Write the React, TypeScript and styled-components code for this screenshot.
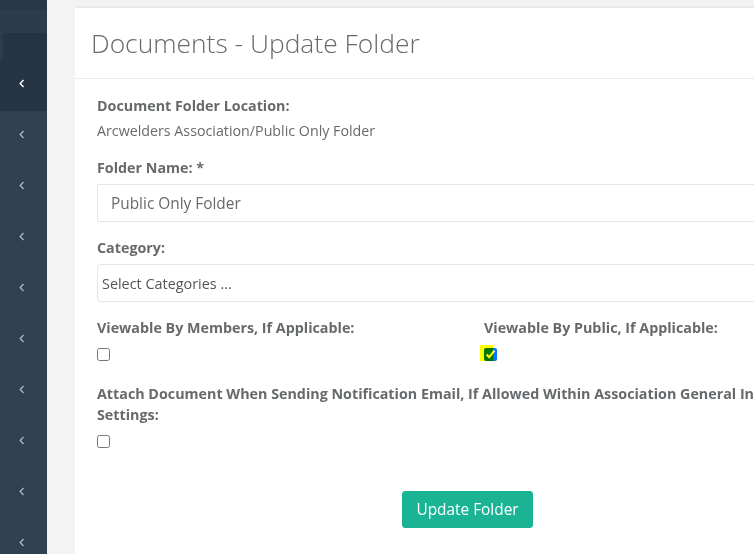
import React from "react";
import styled, { createGlobalStyle } from "styled-components";

const Global = createGlobalStyle`
  html, body { margin: 0; padding: 0; overflow: hidden; background: #f3f3f4; }
  body { font-family: "Open Sans", "Liberation Sans", sans-serif; color: #676a6c; }
  * { box-sizing: border-box; }
`;

const Page = styled.div`
  display: flex;
  width: 1000px;
  height: 554px;
  overflow: hidden;
  background: #f3f3f4;
`;

const Sidebar = styled.nav`
  width: 47px;
  flex: none;
  background: #2f4050;
  display: flex;
  flex-direction: column;
  overflow: hidden;
`;

const SideTop = styled.div`
  height: 33px;
  flex: none;
  background: linear-gradient(#27374a 0 10px, #2c3c4e 10px);
`;

const SideProfile = styled.div`
  height: 27px;
  flex: none;
  background: #2c3c4e;
  padding-left: 3px;
  display: flex;
`;

const SideProfileInner = styled.div`
  flex: 1;
  background: #243444;
`;

const SideItem = styled.div<{ $active?: boolean }>`
  height: 51px;
  flex: none;
  display: flex;
  align-items: center;
  padding: 0 0 4px 19px;
  background: ${(p) => (p.$active ? "#263545" : "transparent")};
  color: ${(p) => (p.$active ? "#ffffff" : "#a7b1c2")};
`;

const Main = styled.main`
  flex: 1;
  padding: 6px 0 0 28px;
`;

const Card = styled.section`
  width: 785px;
  background: #fff;
  border-top: 2px solid #e7eaec;
  height: 560px;
`;

const CardHeader = styled.header`
  height: 71px;
  border-bottom: 1px solid #e7eaec;
  padding: 0 16px;
  display: flex;
  align-items: center;
`;

const Title = styled.h1`
  margin: 0;
  font-weight: 300;
  font-size: 26.4px;
  color: #676a6c;
`;

const CardBody = styled.div`
  padding: 16px 22px 0;
`;

const Label = styled.div`
  font-weight: 700;
  font-size: 14.3px;
  line-height: 21px;
`;

const Value = styled.div`
  font-size: 14.25px;
  line-height: 20px;
  margin-top: 5px;
`;

const Group = styled.div<{ $mb?: number }>`
  margin-bottom: ${(p) => p.$mb ?? 15}px;
`;

const Input = styled.div`
  margin-top: 6px;
  height: 38px;
  border: 1px solid #e5e6e7;
  border-radius: 1px;
  padding: 0 13px;
  display: flex;
  align-items: center;
  font-size: 15.4px;
  color: #676a6c;
`;

const Select = styled.div`
  margin-top: 6px;
  height: 38px;
  border: 1px solid #e5e6e7;
  border-radius: 4px;
  padding: 0 4px;
  display: flex;
  align-items: center;
  font-size: 14.4px;
  color: #555;
`;

const Row = styled.div`
  display: grid;
  grid-template-columns: 1fr 1fr;
  column-gap: 33px;
  margin-bottom: 22px;
`;

const CheckWrap = styled.div`
  position: relative;
  margin-top: 10px;
  height: 13px;
  width: 13px;
  display: flex;
`;

const Check = styled.input`
  margin: 0;
  width: 13px;
  height: 13px;
`;

const Highlight = styled.span`
  position: absolute;
  left: -4px;
  top: -3px;
  width: 13px;
  height: 16px;
  background: #ffff00;
  mix-blend-mode: multiply;
  pointer-events: none;
`;

const Actions = styled.div`
  display: flex;
  justify-content: center;
  padding-top: 28px;
`;

const Button = styled.button`
  background: #1ab394;
  border: 1px solid #1ab394;
  color: #fff;
  border-radius: 3px;
  height: 37px;
  padding: 0 13px;
  font-family: "Open Sans", "Liberation Sans", sans-serif;
  font-size: 15.4px;
`;

const Chevron = () => (
  <svg width="6" height="9" viewBox="0 0 6 9" fill="none">
    <polyline points="4.5,1 1.2,4.5 4.5,8" stroke="currentColor" strokeWidth="1.4" />
  </svg>
);

export default function App() {
  const items = Array.from({ length: 10 });
  return (
    <>
      <Global />
      <Page>
        <Sidebar>
          <SideTop />
          <SideProfile>
            <SideProfileInner />
          </SideProfile>
          {items.map((_, i) => (
            <SideItem key={i} $active={i === 0}>
              <Chevron />
            </SideItem>
          ))}
        </Sidebar>
        <Main>
          <Card>
            <CardHeader>
              <Title>Documents - Update Folder</Title>
            </CardHeader>
            <CardBody>
              <Group $mb={16}>
                <Label>Document Folder Location:</Label>
                <Value>Arcwelders Association/Public Only Folder</Value>
              </Group>
              <Group>
                <Label>Folder Name: *</Label>
                <Input>Public Only Folder</Input>
              </Group>
              <Group>
                <Label>Category:</Label>
                <Select>Select Categories ...</Select>
              </Group>
              <Row>
                <div>
                  <Label>Viewable By Members, If Applicable:</Label>
                  <CheckWrap>
                    <Check type="checkbox" />
                  </CheckWrap>
                </div>
                <div>
                  <Label>Viewable By Public, If Applicable:</Label>
                  <CheckWrap>
                    <Check type="checkbox" defaultChecked />
                    <Highlight />
                  </CheckWrap>
                </div>
              </Row>
              <Group>
                <Label>
                  Attach Document When Sending Notification Email, If Allowed Within Association General Information
                  Settings:
                </Label>
                <CheckWrap>
                  <Check type="checkbox" />
                </CheckWrap>
              </Group>
              <Actions>
                <Button>Update Folder</Button>
              </Actions>
            </CardBody>
          </Card>
        </Main>
      </Page>
    </>
  );
}
